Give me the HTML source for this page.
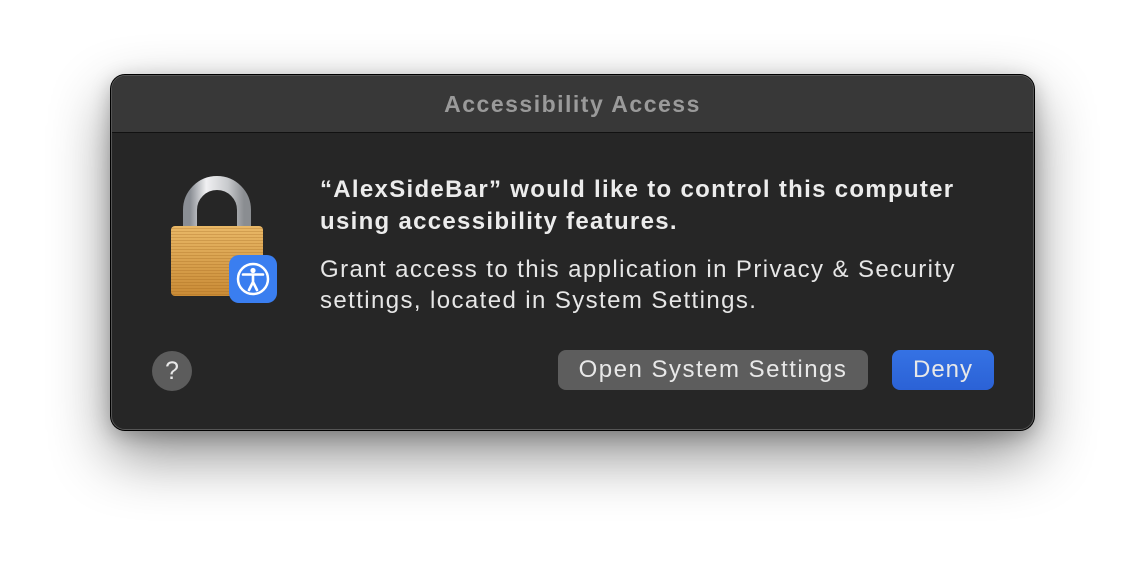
<!DOCTYPE html>
<html><head><style>
body{margin:0;width:1146px;height:578px;background:#fff;position:relative;overflow:hidden;font-family:"Liberation Sans",Arial,sans-serif}
.win{position:absolute;left:111px;top:75px;width:921px;height:353px;border-radius:14px;background:#262626;border:1px solid #555;box-shadow:0 0 0 1px #000,0 25px 60px rgba(0,0,0,.45),0 5px 20px rgba(0,0,0,.25);overflow:hidden}
.tb{height:56px;background:#383838;border-bottom:1px solid #111;text-align:center;line-height:56px;color:#9a9a9a;font-weight:bold;font-size:23px;letter-spacing:1.5px}
.t{position:absolute;left:208px;color:#e6e6e6;font-size:24px;white-space:nowrap;letter-spacing:1.4px}
.b{font-weight:bold;color:#ececec;letter-spacing:1.3px}
.btn{position:absolute;top:274px;height:40px;border-radius:8px;color:#e8e8e8;font-size:24px;line-height:39px;text-align:center}
</style></head><body>
<div class="win">
<div class="tb">Accessibility Access</div>
<div class="t b" style="top:100px">“AlexSideBar” would like to control this computer</div>
<div class="t b" style="top:132px">using accessibility features.</div>
<div class="t" style="top:180px">Grant access to this application in Privacy &amp; Security</div>
<div class="t" style="top:211px">settings, located in System Settings.</div>
<svg style="position:absolute;left:55px;top:98px" width="120" height="132" viewBox="0 0 120 132">
<defs>
<linearGradient id="sh" x1="0" x2="1"><stop offset="0" stop-color="#8a8e94"/><stop offset=".3" stop-color="#f0f0f2"/><stop offset=".7" stop-color="#c8cacd"/><stop offset="1" stop-color="#8a8d91"/></linearGradient>
<linearGradient id="bd" x1="0" y1="0" x2="0" y2="1"><stop offset="0" stop-color="#e9b867"/><stop offset="1" stop-color="#c98b36"/></linearGradient>
<pattern id="ln" width="4" height="3" patternUnits="userSpaceOnUse"><rect width="4" height="1" fill="rgba(150,90,20,.25)"/></pattern>
</defs>
<path d="M23 58 V36 A27 27 0 0 1 77 36 V58" fill="none" stroke="url(#sh)" stroke-width="14"/>
<rect x="4" y="52" width="92" height="70" rx="4" fill="url(#bd)"/>
<rect x="4" y="52" width="92" height="70" rx="4" fill="url(#ln)"/>
<rect x="62" y="81" width="48" height="48" rx="10" fill="#3a7ef0"/>
<circle cx="86" cy="105" r="15" fill="none" stroke="#fff" stroke-width="2.5"/>
<circle cx="86" cy="96.5" r="2.6" fill="#fff"/>
<path d="M76 100.5 L96 100.5 M86 100.5 V108 M86 108 L82 116 M86 108 L90 116" stroke="#fff" stroke-width="2.6" stroke-linecap="round" fill="none"/>
</svg>
<div style="position:absolute;left:40px;top:275px;width:40px;height:40px;border-radius:50%;background:#5c5c5c;color:#e8e8e8;font-size:25px;text-align:center;line-height:40px">?</div>
<div class="btn" style="left:446px;width:310px;background:#5d5d5d;letter-spacing:1.5px">Open System Settings</div>
<div class="btn" style="left:780px;width:102px;background:linear-gradient(#3572e4,#2b62d6);letter-spacing:1px">Deny</div>
</div>
</body></html>
